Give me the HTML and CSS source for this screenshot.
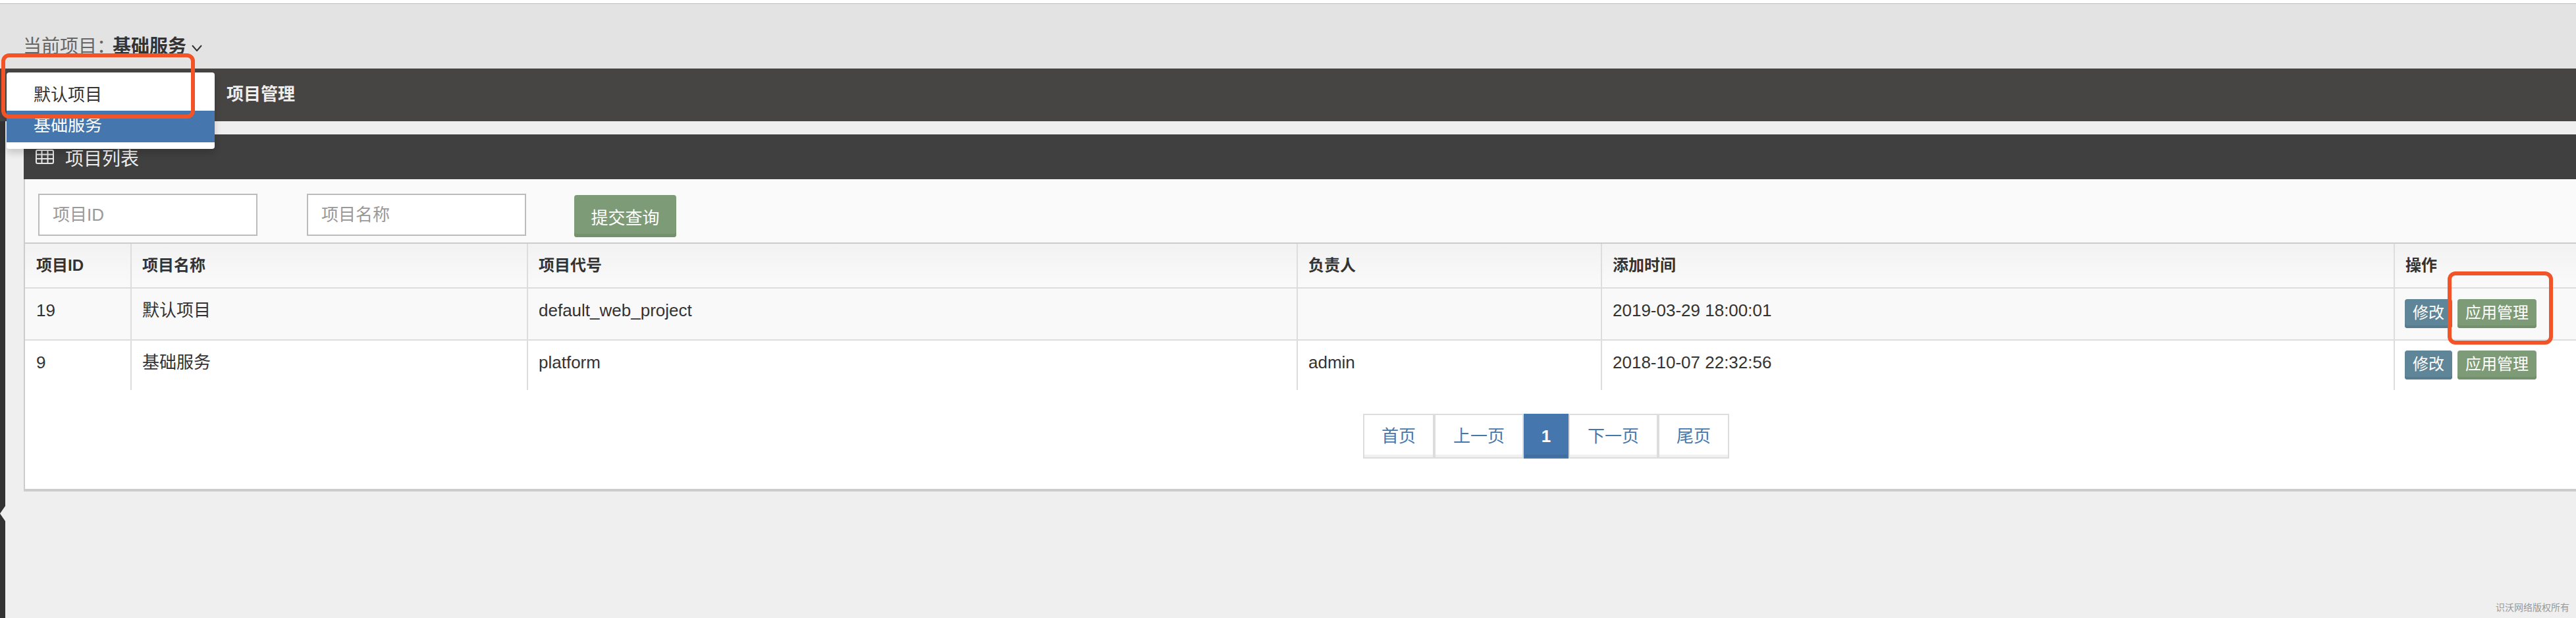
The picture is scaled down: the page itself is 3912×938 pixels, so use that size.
FILE: index.html
```html
<!DOCTYPE html>
<html lang="zh-CN">
<head>
<meta charset="utf-8">
<title>项目列表</title>
<link rel="stylesheet" href="styles.css">
</head>
<body>
<div class="topline"></div>
<header class="projectbar">
  <span class="projectbar-label">当前项目：</span>
  <strong class="projectbar-value">基础服务</strong>
  <svg class="chevron" width="16" height="10" viewBox="0 0 16 10"><polyline points="1,1 8,9 15,1" fill="none" stroke="#333" stroke-width="2"/></svg>
</header>
<nav class="navbar"><span class="navbar-item">项目管理</span></nav>
<div class="layout">
  <aside class="sidebar"><span class="sidebar-notch"></span></aside>
  <main class="content">
    <section class="panel">
      <div class="panel-head">
        <svg class="grid-icon" width="28" height="22" viewBox="0 0 28 22">
          <rect x="1" y="1" width="26" height="20" rx="2" fill="none" stroke="#e6e6e6" stroke-width="2"/>
          <path d="M1 7.5H27M1 14H27M9.5 1V21M18.5 1V21" fill="none" stroke="#e6e6e6" stroke-width="2"/>
        </svg>
        <span class="panel-title">项目列表</span>
      </div>
      <div class="panel-body">
        <form class="filters">
          <input class="field" type="text" placeholder="项目ID">
          <input class="field" type="text" placeholder="项目名称">
          <button class="submit" type="button">提交查询</button>
        </form>
        <table class="grid">
          <colgroup>
            <col class="c-id"><col class="c-name"><col class="c-code"><col class="c-owner"><col class="c-time"><col class="c-ops">
          </colgroup>
          <thead>
            <tr><th>项目ID</th><th>项目名称</th><th>项目代号</th><th>负责人</th><th>添加时间</th><th>操作</th></tr>
          </thead>
          <tbody>
            <tr class="odd">
              <td>19</td><td>默认项目</td><td>default_web_project</td><td></td><td>2019-03-29 18:00:01</td>
              <td class="ops"><span class="btn btn-edit">修改</span><span class="btn btn-app">应用管理</span></td>
            </tr>
            <tr class="even">
              <td>9</td><td>基础服务</td><td>platform</td><td>admin</td><td>2018-10-07 22:32:56</td>
              <td class="ops"><span class="btn btn-edit">修改</span><span class="btn btn-app">应用管理</span></td>
            </tr>
          </tbody>
        </table>
        <div class="pager">
          <a class="page p-short">首页</a><a class="page p-long">上一页</a><a class="page p-active">1</a><a class="page p-long">下一页</a><a class="page p-short">尾页</a>
        </div>
      </div>
    </section>
    <footer class="copyright">识沃网络版权所有</footer>
  </main>
</div>
<ul class="dropdown">
  <li class="dropdown-item">默认项目</li>
  <li class="dropdown-item is-selected">基础服务</li>
</ul>
<div class="mark mark-menu"></div>
<div class="mark mark-ops"></div>
</body>
</html>
```
FILE: styles.css
```css
* { box-sizing: border-box; }
html, body { margin: 0; padding: 0; height: 938px; overflow: hidden; }
body {
  position: relative;
  background: #efefef;
  color: #333;
  font-family: "Liberation Sans", "Noto Sans CJK SC", sans-serif;
  font-size: 26px;
}
.topline { height: 6px; background: #fff; border-bottom: 1px solid #bbb; }
.projectbar {
  height: 98px;
  background: #e3e3e3;
  padding: 47px 0 0 35px;
  display: flex;
  align-items: flex-start;
  font-size: 28px;
  line-height: 36px;
  white-space: nowrap;
}
.projectbar-label { color: #666; flex: 0 0 136px; min-width: 0; }
.projectbar-value { color: #333; font-weight: 700; }
.chevron { margin: 15px 0 0 8px; }
.navbar {
  height: 80px;
  background: #474543;
  padding-left: 344px;
  line-height: 78px;
}
.navbar-item { color: #eee; font-weight: 700; }
.layout { display: flex; height: 754px; }
.sidebar { width: 8px; background: #333; position: relative; }
.sidebar-notch {
  position: absolute;
  left: 0;
  top: 584px;
  width: 8px;
  height: 23px;
  background: #efefef;
  clip-path: polygon(0 50%, 100% 0, 100% 100%);
}
.content { flex: 1; min-width: 0; padding: 20px 0 0 28px; }
.panel-head {
  height: 68px;
  background: #404040;
  padding-left: 18px;
  display: flex;
  align-items: flex-start;
  color: #eee;
}
.grid-icon { margin-top: 23px; }
.panel-title { margin-left: 17px; font-size: 28px; line-height: 36px; padding-top: 20px; }
.panel-body {
  background: #fff;
  border-left: 2px solid #ccc;
  border-bottom: 4px solid #ccc;
  padding-bottom: 46px;
}
.filters {
  height: 96px;
  background: #fafafa;
  padding: 22px 0 0 20px;
  display: flex;
  align-items: flex-start;
  gap: 75px;
}
.field {
  width: 333px;
  height: 64px;
  border: 2px solid #bbb;
  background: #fff;
  padding: 0 20px;
  font: inherit;
  color: #333;
}
.field::placeholder { color: #999; opacity: 1; }
.submit {
  width: 155px;
  height: 64px;
  margin: 2px 0 0 -2px;
  border: 0;
  border-radius: 4px;
  background: #7d9b76;
  box-shadow: inset 0 -5px 0 #73916c;
  color: #fff;
  font: inherit;
  padding: 0;
}
.grid {
  width: 100%;
  table-layout: fixed;
  border-collapse: separate;
  border-spacing: 0;
  border-top: 2px solid #ccc;
}
.c-id { width: 160px; }
.c-name { width: 602px; }
.c-code { width: 1169px; }
.c-owner { width: 462px; }
.c-time { width: 1204px; }
.c-ops { width: 277px; }
.grid th, .grid td {
  border-left: 2px solid #ddd;
  padding: 15px 16px 0;
  text-align: left;
  vertical-align: top;
  line-height: 36px;
  color: #333;
}
.grid th:first-child, .grid td:first-child { border-left: 0; padding-left: 17px; }
.grid th {
  height: 68px;
  font-size: 24px;
  font-weight: 700;
  background: linear-gradient(#f2f2f2, #fafafa);
  border-bottom: 2px solid #ddd;
}
.odd td { height: 79px; background: #f9f9f9; border-bottom: 2px solid #ddd; }
.even td { height: 75px; background: #fff; }
.grid .ops { padding-top: 16px; padding-left: 15px; line-height: 0; white-space: nowrap; }
.even .ops { padding-top: 15px; }
.btn {
  display: inline-block;
  height: 44px;
  line-height: 42px;
  border-radius: 4px;
  color: #fff;
  font-size: 24px;
  text-align: center;
}
.btn-edit { width: 72px; background: #5f8599; box-shadow: inset 0 -4px 0 #587c8f; }
.btn-app { width: 120px; margin-left: 8px; background: #7d9b76; box-shadow: inset 0 -4px 0 #73916c; }
.pager { display: flex; margin: 36px 0 0 2032px; height: 68px; }
.page {
  height: 68px;
  border: 2px solid #ddd;
  background: #fff;
  box-shadow: inset 0 -4px 0 #f0f0f0;
  color: #4577ae;
  text-align: center;
  line-height: 64px;
}
.p-short { width: 108px; }
.p-long { width: 136px; }
.p-active {
  width: 68px;
  background: #4577ae;
  border-color: #4577ae;
  box-shadow: inset 0 -4px 0 #3f6e9f;
  color: #fff;
  font-weight: 700;
}
.copyright {
  margin-top: 166px;
  padding-right: 10px;
  text-align: right;
  font-size: 14px;
  line-height: 20px;
  color: #999;
}
.dropdown {
  position: absolute;
  left: 10px;
  top: 110px;
  width: 316px;
  height: 116px;
  margin: 0;
  padding: 0;
  list-style: none;
  background: #fff;
  border-radius: 4px;
  box-shadow: 0 6px 12px rgba(0, 0, 0, .175);
}
.dropdown-item { height: 58px; padding: 16px 0 0 41px; line-height: 36px; color: #333; }
.dropdown-item.is-selected { height: 48px; padding-top: 4px; background: #4577ae; color: #fff; }
.mark { position: absolute; border: 6px solid #f25327; border-radius: 12px; }
.mark-menu { left: 2px; top: 81px; width: 294px; height: 99px; }
.mark-ops { left: 3717px; top: 412px; width: 160px; height: 111px; }
```
